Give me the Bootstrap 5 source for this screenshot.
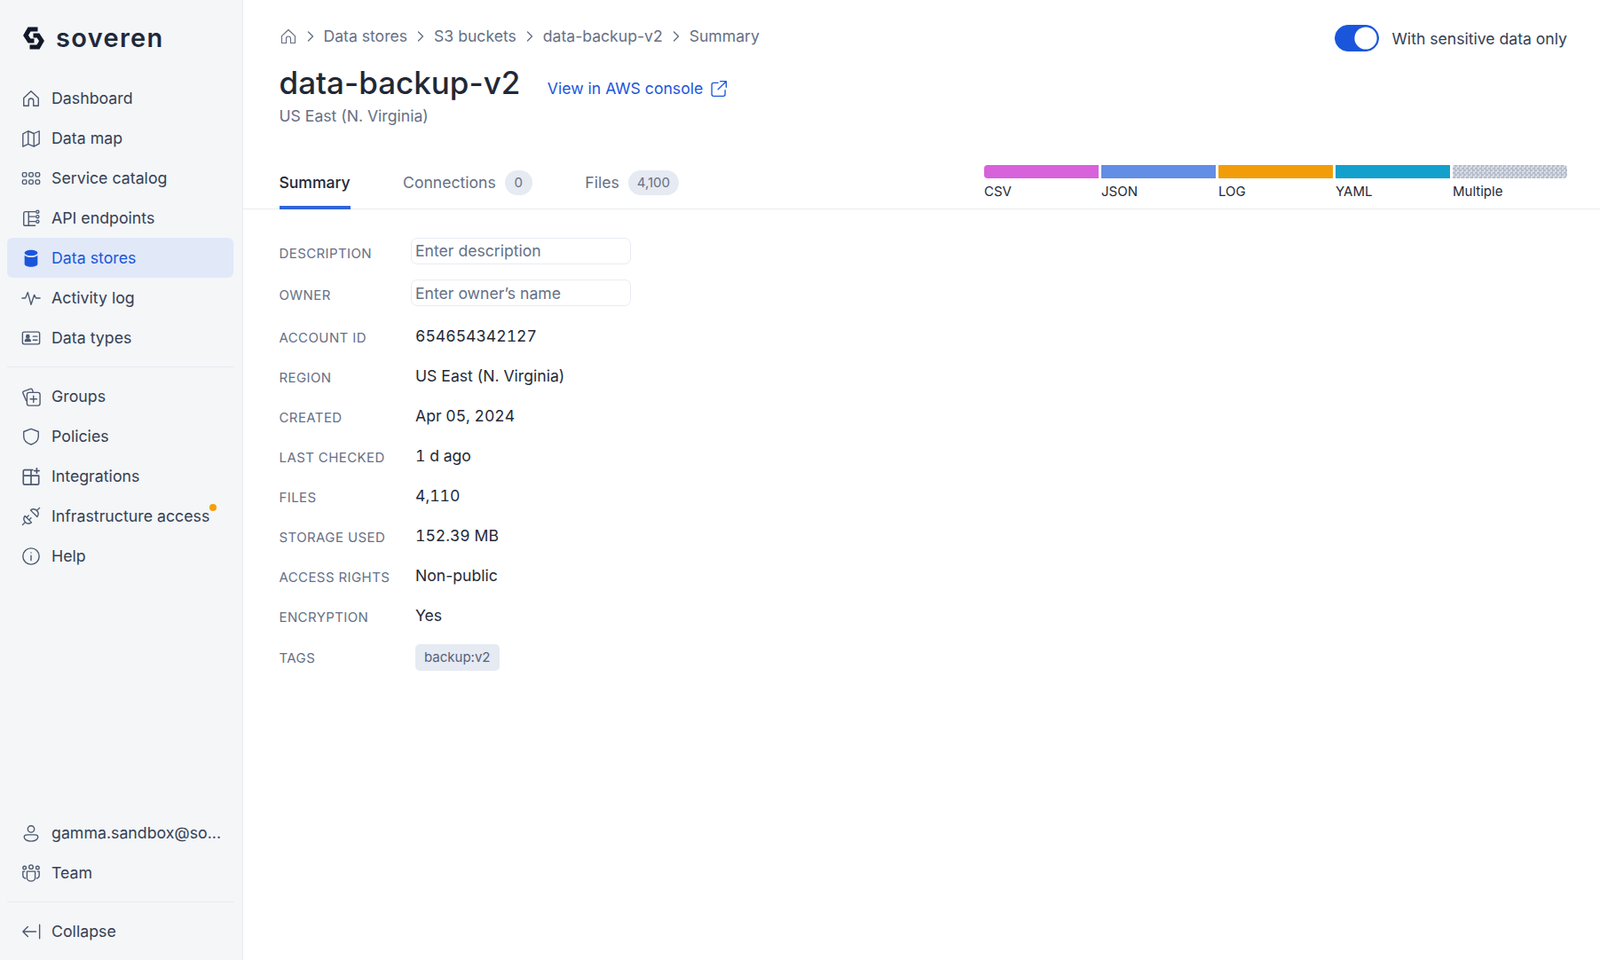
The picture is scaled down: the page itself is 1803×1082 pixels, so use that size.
<!DOCTYPE html>
<html lang="en">
<head>
  <meta charset="utf-8">
  <title>data-backup-v2</title>
  <link href="https://cdn.jsdelivr.net/npm/bootstrap@5.3.2/dist/css/bootstrap.min.css" rel="stylesheet">
  <style>
    body { font-family: Inter, "Liberation Sans", sans-serif; font-size: 17.6px; color: #1f2937; background: #fff; }
    .app-shell { height: 1082px; overflow: hidden; }
    .side-bar { width: 274px; flex: none; background: #f4f6f8; border-right: 1px solid #e8ebf0; padding: 0 10px 10px 8px; }
    .brand-row { height: 88px; padding: 30px 0 0 17px; gap: 12px; }
    .brand-name { font-size: 29px; font-weight: 600; line-height: 26px; color: #1e293b; letter-spacing: 1.3px; }
    .side-link { height: 45px; padding: 2px 0 0 16px; gap: 12px; font-size: 17.75px; color: #344054; text-decoration: none; border-radius: 6px; position: relative; }
    .side-link svg { width: 22px; height: 22px; margin-top: -2px; flex: none; fill: none; stroke: #4b5870; stroke-width: 1.5; stroke-linecap: round; stroke-linejoin: round; }
    .side-link.is-active { background: #e1e9f9; color: #1a56db; }
    .side-link.is-active svg { fill: #1a56db; stroke: none; }
    .side-rule { border-top: 1px solid #e8ebf0; margin: 10px 0; opacity: 1; }
    .alert-dot { position: absolute; left: 228px; top: 9px; width: 8px; height: 8px; border-radius: 50%; background: #f59e0b; }
    .main-area { min-width: 0; }
    .head-block { padding: 0 37px 0 40.5px; height: 177px; }
    .crumb-row { padding-top: 29px; gap: 9px; color: #667085; line-height: 24px; }
    .crumb-row svg { width: 12px; height: 12px; fill: none; stroke: #667085; stroke-width: 1.4; stroke-linecap: round; stroke-linejoin: round; }
    .crumb-row .crumb-home { width: 20px; height: 20px; }
    .title-row { margin-top: 18px; }
    .title-text { font-size: 35px; font-weight: 500; line-height: 44px; color: #1f2937; margin: 0; }
    .aws-link { color: #1a56db; text-decoration: none; margin-left: 30.5px; gap: 8px; padding-top: 14px; }
    .aws-link svg { width: 20px; height: 20px; fill: none; stroke: #1a56db; stroke-width: 1.6; stroke-linecap: round; stroke-linejoin: round; }
    .sub-text { color: #667085; line-height: 24px; margin-top: 4px; }
    .switch-box { position: absolute; right: 37px; top: 28px; gap: 15px; color: #344054; }
    .switch-box label { padding-top: 2px; }
    .switch-box .form-check-input { width: 50px; height: 30px; margin: 0; background-color: #1a56db; border-color: #1a56db; float: none; background-image: url("data:image/svg+xml,%3csvg xmlns='http://www.w3.org/2000/svg' viewBox='-4 -4 8 8'%3e%3ccircle r='3.6' fill='%23fff'/%3e%3c/svg%3e"); }
    .tab-strip { height: 59px; border-bottom: 1px solid #e9ebef; padding: 0 37px 0 40.5px; }
    .tab-list { gap: 59.5px; }
    .tab-item { height: 59px; color: #667085; text-decoration: none; gap: 10px; padding-top: 2px; border-bottom: 3px solid transparent; margin-bottom: -1px; }
    .tab-item.is-active { color: #1f2937; border-bottom: 4px solid #2f65d9; font-weight: 500; padding-top: 3px; letter-spacing: -.05px; }
    .count-pill { background: #e6eaf2; color: #667085; font-size: 15px; line-height: 28px; height: 28px; min-width: 31px; padding: 0 10px; text-align: center; border-radius: 14px; }
    .split-box { width: 657px; margin-top: 9px; gap: 3px; }
    .split-col { flex: 1 1 0; font-size: 15px; line-height: 20px; color: #1f2937; }
    .split-bar { height: 15px; margin-bottom: 5px; }
    .split-col:first-child .split-bar { border-radius: 4px 0 0 4px; }
    .split-col:last-child .split-bar { border-radius: 0 4px 4px 0; }
    .tone-csv { background: #d861dc; }
    .tone-json { background: #628ee5; }
    .tone-log { background: #f29c0a; }
    .tone-yaml { background: #14a0cc; }
    .tone-multi { background: repeating-conic-gradient(#b5bccb 0 25%, #d7dbe4 0 50%) 0 0 / 5px 5px; }
    .info-block { padding: 23px 0 0 40.5px; }
    .info-row { height: 45px; }
    .info-row.is-field { height: 47.5px; }
    .info-row.is-first { margin-top: 2px; }
    .info-row.is-tag { padding-top: 2px; }
    .info-label { width: 148.5px; flex: none; font-size: 15px; letter-spacing: .4px; text-transform: uppercase; color: #667085; padding-top: 5px; }
    .info-row.is-field .info-label { padding-top: 6px; }
    .info-value { padding: 2px 0 0 5px; color: #1f2937; }
    .tab-digits { font-variant-numeric: tabular-nums; }
    .field-input { width: 248px; height: 30px; padding: 0 4px; font-size: 17.6px; line-height: 26px; border: 1px solid #e8ebf2; border-radius: 7px; color: #1f2937; }
    .field-input::placeholder { color: #667085; opacity: 1; }
    .tag-chip { background: #e6eaf2; color: #56617a; font-size: 15px; line-height: 30px; height: 30px; padding: 0 10px; border-radius: 5px; }
  </style>
</head>
<body>
  <div class="app-shell d-flex">
    <aside class="side-bar d-flex flex-column">
      <div class="brand-row d-flex align-items-start">
        <svg width="26" height="26" viewBox="0 0 26 26" fill="none" stroke="#111827" stroke-width="5">
          <path d="M17.500 3H8L4 10 8 16H13.500"/>
          <path d="M8.500 23H18L22 16 18 10H12.500"/>
        </svg>
        <span class="brand-name">soveren</span>
      </div>
      <nav class="d-flex flex-column">
        <a class="side-link d-flex align-items-center" href="#"><svg viewBox="0 0 24 24"><path d="M3 11.500 12 3l9 8.500V21h-6v-6a3 3 0 0 0-6 0v6H3Z"/></svg>Dashboard</a>
        <a class="side-link d-flex align-items-center" href="#"><svg viewBox="0 0 24 24"><path d="M2 6.500 8.500 3 15.500 6 22 3V18.500l-6.500 3.500L8.500 19 2 22ZM8.500 3V19M15.500 6V22"/></svg>Data map</a>
        <a class="side-link d-flex align-items-center" href="#"><svg viewBox="0 0 24 24"><rect x="1.500" y="5" width="5" height="5" rx="1.500"/><rect x="9.500" y="5" width="5" height="5" rx="1.500"/><rect x="17.500" y="5" width="5" height="5" rx="1.500"/><rect x="1.500" y="14" width="5" height="5" rx="1.500"/><rect x="9.500" y="14" width="5" height="5" rx="1.500"/><rect x="17.500" y="14" width="5" height="5" rx="1.500"/></svg>Service catalog</a>
        <a class="side-link d-flex align-items-center" href="#"><svg viewBox="0 0 24 24"><path d="M17 4H5a2 2 0 0 0-2 2v14a1 1 0 0 0 1 1h13M9 4v17M9 10h8M9 16h8"/><circle cx="20" cy="4" r="1.700"/><circle cx="20" cy="10" r="1.700"/><circle cx="20" cy="16" r="1.700"/></svg>API endpoints</a>
        <a class="side-link is-active d-flex align-items-center" href="#"><svg viewBox="0 0 24 24"><path d="M4 5.500C4 3.500 7.600 2 12 2s8 1.500 8 3.500S16.400 9 12 9 4 7.500 4 5.500Z"/><path d="M4 8.500C5.600 10.300 8.600 11 12 11s6.400-.7 8-2.500V19c0 2.200-3.600 3.500-8 3.500S4 21.200 4 19Z"/></svg>Data stores</a>
        <a class="side-link d-flex align-items-center" href="#"><svg viewBox="0 0 24 24"><path d="M1 12h4l3-7 4 15 4-12 2 4h5"/></svg>Activity log</a>
        <a class="side-link d-flex align-items-center" href="#"><svg viewBox="0 0 24 24"><rect x="1.500" y="4.500" width="21" height="15" rx="2"/><circle cx="8" cy="10" r="1.800" fill="#4b5870"/><path d="M4.800 16c0-2 1.300-3 3.200-3s3.200 1 3.200 3ZM14.500 10H19.500M14.500 14.500H19.500" fill="#4b5870"/></svg>Data types</a>
      </nav>
      <hr class="side-rule">
      <nav class="d-flex flex-column">
        <a class="side-link d-flex align-items-center" href="#"><svg viewBox="0 0 24 24"><path d="M6 17 2 7.500a1.500 1.500 0 0 1 .8-2L11 2.500a2 2 0 0 1 2.500 1l.8 2.500"/><rect x="7" y="7" width="16" height="16" rx="2.500"/><path d="M15 11v8M11 15h8"/></svg>Groups</a>
        <a class="side-link d-flex align-items-center" href="#"><svg viewBox="0 0 24 24"><path d="M12 2.500 21 6v6c0 5-3.800 8.200-9 9.800C6.800 20.200 3 17 3 12V6Z"/></svg>Policies</a>
        <a class="side-link d-flex align-items-center" href="#"><svg viewBox="0 0 24 24"><path d="M14 4H4a1.500 1.500 0 0 0-1.500 1.500v15A1.500 1.500 0 0 0 4 22h16a1.500 1.500 0 0 0 1.500-1.500V11H2.500M12 4v18M19 2v6M16 5h6" stroke-width="1.800"/></svg>Integrations</a>
        <a class="side-link d-flex align-items-center" href="#"><svg viewBox="0 0 24 24"><path d="M4.500 11.500l8 8a5.700 5.700 0 0 1-8-8ZM5 19 1.500 22.500M6.500 13.500 9 11M9.500 16.500 12 14M11.500 4.500l8 8a5.700 5.700 0 0 0-8-8ZM19 5 22.500 1.500"/></svg>Infrastructure access<span class="alert-dot"></span></a>
        <a class="side-link d-flex align-items-center" href="#"><svg viewBox="0 0 24 24"><circle cx="12" cy="12" r="10"/><path d="M12 11v6M12 7.500v.1"/></svg>Help</a>
      </nav>
      <nav class="d-flex flex-column mt-auto">
        <a class="side-link d-flex align-items-center" href="#"><svg viewBox="0 0 24 24"><circle cx="12" cy="7" r="4"/><path d="M3.500 17c0-2 2-3 4-3h9c2 0 4 1 4 3s-3 5-8.500 5-8.500-3-8.500-5Z"/></svg>gamma.sandbox@so...</a>
        <a class="side-link d-flex align-items-center" href="#"><svg viewBox="0 0 24 24"><circle cx="12" cy="4.500" r="2.500"/><circle cx="4" cy="5.500" r="2"/><circle cx="20" cy="5.500" r="2"/><path d="M7 10h10v8c0 2-2 4-5 4s-5-2-5-4ZM4 10H2v5c0 2 1 3 3 3.500M20 10h2v5c0 2-1 3-3 3.500"/></svg>Team</a>
      </nav>
      <hr class="side-rule">
      <a class="side-link d-flex align-items-center" href="#"><svg viewBox="0 0 24 24"><path d="M18 12H2M8 6l-6 6 6 6M22.500 3.500v17"/></svg>Collapse</a>
    </aside>

    <main class="main-area flex-grow-1 position-relative">
      <div class="head-block">
        <div class="crumb-row d-flex align-items-center">
          <svg class="crumb-home" viewBox="0 0 24 24"><path d="M3 11.500 12 3l9 8.500V21h-6v-6a3 3 0 0 0-6 0v6H3Z"/></svg>
          <svg viewBox="0 0 12 12"><path d="M3.500 1 8.500 6 3.500 11"/></svg>
          <span>Data stores</span>
          <svg viewBox="0 0 12 12"><path d="M3.500 1 8.500 6 3.500 11"/></svg>
          <span>S3 buckets</span>
          <svg viewBox="0 0 12 12"><path d="M3.500 1 8.500 6 3.500 11"/></svg>
          <span>data-backup-v2</span>
          <svg viewBox="0 0 12 12"><path d="M3.500 1 8.500 6 3.500 11"/></svg>
          <span>Summary</span>
        </div>
        <div class="title-row d-flex align-items-center">
          <h1 class="title-text">data-backup-v2</h1>
          <a class="aws-link d-flex align-items-center" href="#">View in AWS console
            <svg viewBox="0 0 24 24"><path d="M11 4H5a2.500 2.500 0 0 0-2.500 2.500v13A2.500 2.500 0 0 0 5 22h13a2.500 2.500 0 0 0 2.500-2.500V14M14 2h8v8M22 2 11 13"/></svg>
          </a>
        </div>
        <div class="sub-text">US East (N. Virginia)</div>
      </div>

      <div class="switch-box d-flex align-items-center form-check form-switch p-0">
        <input class="form-check-input" type="checkbox" role="switch" id="sensitiveOnly" checked>
        <label class="form-check-label" for="sensitiveOnly">With sensitive data only</label>
      </div>

      <div class="tab-strip d-flex justify-content-between align-items-start">
        <div class="tab-list d-flex">
          <a class="tab-item is-active d-flex align-items-center" href="#">Summary</a>
          <a class="tab-item d-flex align-items-center" href="#">Connections <span class="count-pill">0</span></a>
          <a class="tab-item d-flex align-items-center" href="#">Files <span class="count-pill">4,100</span></a>
        </div>
        <div class="split-box d-flex">
          <div class="split-col"><div class="split-bar tone-csv"></div>CSV</div>
          <div class="split-col"><div class="split-bar tone-json"></div>JSON</div>
          <div class="split-col"><div class="split-bar tone-log"></div>LOG</div>
          <div class="split-col"><div class="split-bar tone-yaml"></div>YAML</div>
          <div class="split-col"><div class="split-bar tone-multi"></div>Multiple</div>
        </div>
      </div>

      <div class="info-block">
        <div class="info-row is-field d-flex align-items-center"><div class="info-label">Description</div><input class="form-control field-input" placeholder="Enter description"></div>
        <div class="info-row is-field d-flex align-items-center"><div class="info-label">Owner</div><input class="form-control field-input" placeholder="Enter owner’s name"></div>
        <div class="info-row is-first d-flex align-items-center"><div class="info-label">Account ID</div><div class="info-value tab-digits">654654342127</div></div>
        <div class="info-row d-flex align-items-center"><div class="info-label">Region</div><div class="info-value">US East (N. Virginia)</div></div>
        <div class="info-row d-flex align-items-center"><div class="info-label">Created</div><div class="info-value tab-digits">Apr 05, 2024</div></div>
        <div class="info-row d-flex align-items-center"><div class="info-label">Last checked</div><div class="info-value tab-digits">1 d ago</div></div>
        <div class="info-row d-flex align-items-center"><div class="info-label">Files</div><div class="info-value tab-digits">4,110</div></div>
        <div class="info-row d-flex align-items-center"><div class="info-label">Storage used</div><div class="info-value tab-digits">152.39 MB</div></div>
        <div class="info-row d-flex align-items-center"><div class="info-label">Access rights</div><div class="info-value">Non-public</div></div>
        <div class="info-row d-flex align-items-center"><div class="info-label">Encryption</div><div class="info-value">Yes</div></div>
        <div class="info-row is-tag d-flex align-items-center"><div class="info-label">Tags</div><div class="info-value"><span class="tag-chip d-inline-block">backup:v2</span></div></div>
      </div>
    </main>
  </div>
  <script src="https://cdn.jsdelivr.net/npm/bootstrap@5.3.2/dist/js/bootstrap.bundle.min.js"></script>
</body>
</html>
